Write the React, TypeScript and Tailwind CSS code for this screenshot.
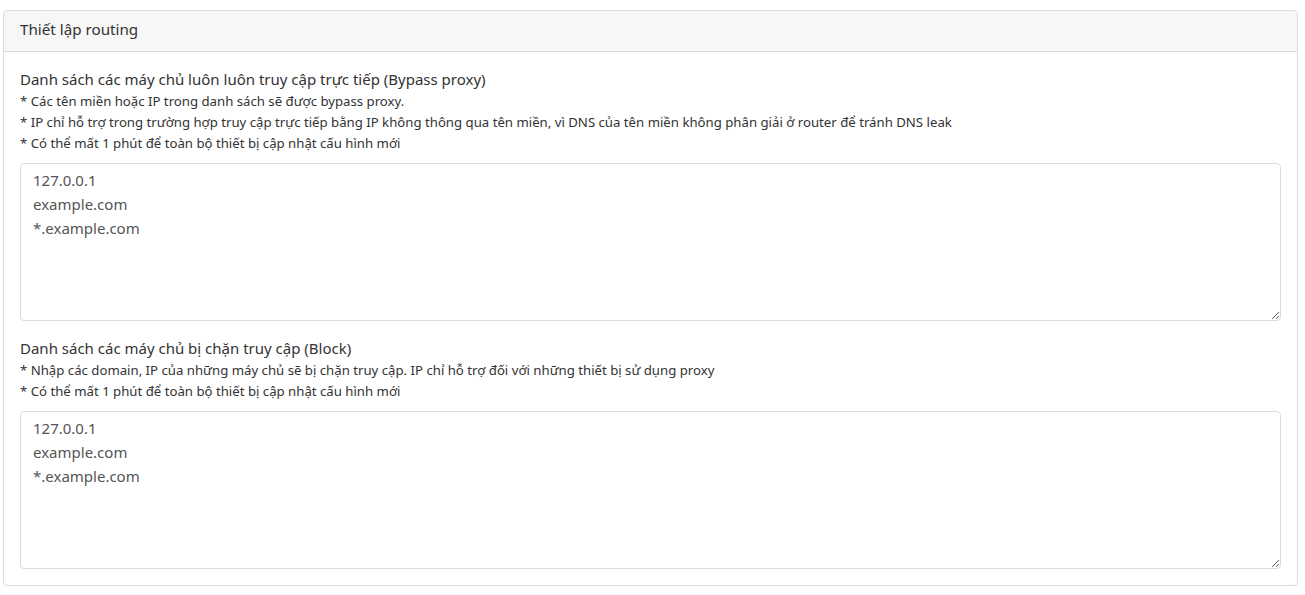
export default function App() {
  const sample = "127.0.0.1\nexample.com\n*.example.com";
  return (
    <div className="min-h-[595px] bg-white pt-[10px] pl-[3px] pr-[7px] font-['Noto_Sans',sans-serif] text-[#333]">
      <div className="rounded-[4px] border border-[#dcdcdc]">
        <div className="h-[41px] flex items-center px-4 pb-[3px] bg-[#f7f7f7] border-b border-[#dcdcdc] rounded-t-[4px] text-[15.2px]">
          Thiết lập routing
        </div>
        <div className="px-4 pt-[15px] pb-4">
          <div className="text-[15px] leading-[24px]">
            Danh sách các máy chủ luôn luôn truy cập trực tiếp (Bypass proxy)
          </div>
          <div className="text-[13.2px] leading-[21px]">
            <div>* Các tên miền hoặc IP trong danh sách sẽ được bypass proxy.</div>
            <div>
              * IP chỉ hỗ trợ trong trường hợp truy cập trực tiếp bằng IP không thông qua tên miền, vì DNS của tên miền không phân giải ở router để tránh DNS leak
            </div>
            <div>* Có thể mất 1 phút để toàn bộ thiết bị cập nhật cấu hình mới</div>
          </div>
          <textarea
            defaultValue={sample}
            className="mt-[9px] block w-full h-[158px] rounded-[4px] border border-[#dcdcdc] px-3 pt-[4px] pb-[6px] text-[15px] leading-[24px] text-[#555] outline-none"
          />
          <div className="mt-[15px] text-[15px] leading-[24px]">
            Danh sách các máy chủ bị chặn truy cập (Block)
          </div>
          <div className="text-[13.2px] leading-[21px]">
            <div>* Nhập các domain, IP của những máy chủ sẽ bị chặn truy cập. IP chỉ hỗ trợ đối với những thiết bị sử dụng proxy</div>
            <div>* Có thể mất 1 phút để toàn bộ thiết bị cập nhật cấu hình mới</div>
          </div>
          <textarea
            defaultValue={sample}
            className="mt-[9px] block w-full h-[158px] rounded-[4px] border border-[#dcdcdc] px-3 pt-[4px] pb-[6px] text-[15px] leading-[24px] text-[#555] outline-none"
          />
        </div>
      </div>
    </div>
  );
}
